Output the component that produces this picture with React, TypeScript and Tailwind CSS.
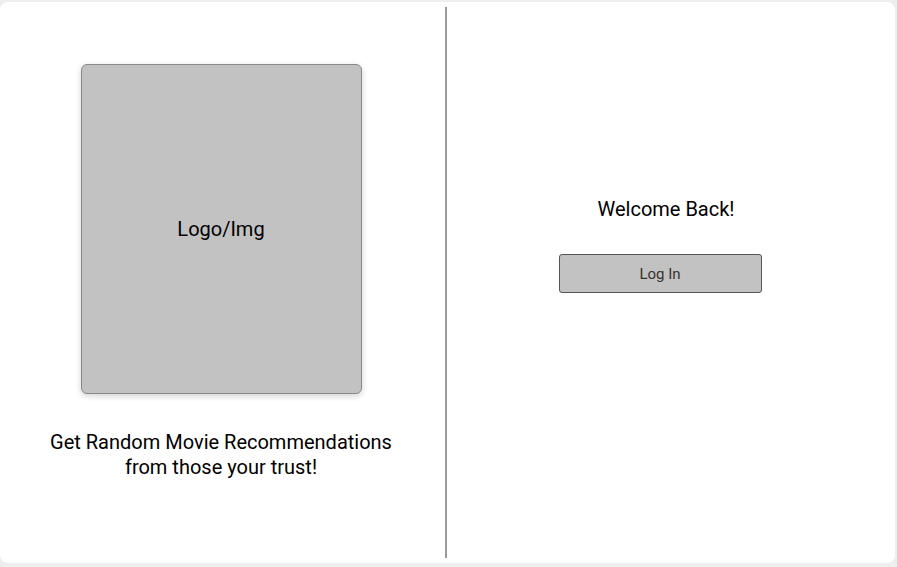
import React from "react";

export default function App() {
  return (
    <div
      className="w-[897px] h-[567px] bg-[#eeeeee] pt-[2px] pr-[2px] pb-[4px]"
      style={{ fontFamily: "Roboto, 'Liberation Sans', sans-serif" }}
    >
      <div className="w-full h-full bg-white rounded-[8px] flex">
        <div className="w-[445px] flex flex-col items-center pt-[62px] pr-[3px]">
          <div className="w-[281px] h-[330px] bg-[#c2c2c2] border border-[#8a8a8a] rounded-[6px] shadow-[0_2px_6px_rgba(0,0,0,0.18)] flex items-center justify-center">
            <span className="text-[20px] text-black">Logo/Img</span>
          </div>
          <p className="mt-[36px] text-[20px] leading-[25px] text-black text-center whitespace-nowrap">
            Get Random Movie Recommendations
            <br />
            from those your trust!
          </p>
        </div>
        <div className="py-[5px]">
          <div className="w-[2px] h-full bg-[#9a9a9a]" />
        </div>
        <div className="flex-1 flex flex-col items-center pt-[195px] pr-[22px]">
          <h1 className="text-[20px] leading-[24px] text-black ml-[12px]">Welcome Back!</h1>
          <button className="mt-[33px] w-[203px] h-[39px] pt-[1px] bg-[#c2c2c2] border border-[#555555] rounded-[3px] text-[15px] text-[#333333]">
            Log In
          </button>
        </div>
      </div>
    </div>
  );
}
